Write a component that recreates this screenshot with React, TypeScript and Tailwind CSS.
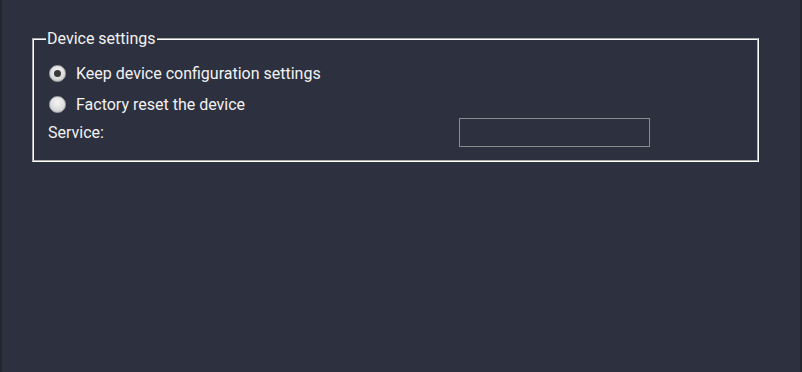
import React from "react";

function Radio({ checked }: { checked?: boolean }) {
  return (
    <span className="relative flex h-[17px] w-[17px] shrink-0 items-center justify-center rounded-full border border-[#a8a8a8] bg-[radial-gradient(circle_at_50%_35%,#f4f4f4_0%,#dedede_55%,#bdbdbd_100%)]">
      {checked && <span className="h-[7px] w-[7px] rounded-full bg-[#3a3a3a]" />}
    </span>
  );
}

export default function App() {
  return (
    <div
      className="flex h-[372px] w-[802px] bg-[#2d303f] text-[#f2f2f2]"
      style={{ fontFamily: "Roboto, 'Liberation Sans', sans-serif" }}
    >
      <div className="w-[2px] bg-[#23252f]" />
      <div className="flex-1 pl-[30px] pr-[41px] pt-[29px]">
        <fieldset className="h-[133px] border-2 border-white px-[14px] [border-style:groove]">
          <legend className="ml-[-2px] px-[1px] text-[16px] leading-[19px]">Device settings</legend>
          <div className="flex flex-col">
            <label className="mt-[14px] flex h-[22px] items-center gap-[10px] pl-[1px]">
              <Radio checked />
              <span className="text-[16px] leading-[19px]">Keep device configuration settings</span>
            </label>
            <label className="mt-[9px] flex h-[22px] items-center gap-[10px] pl-[1px]">
              <Radio />
              <span className="text-[16px] leading-[19px]">Factory reset the device</span>
            </label>
            <div className="mt-[3px] flex h-[29px] items-center">
              <span className="w-[411px] text-[16px] leading-[19px]">Service:</span>
              <div className="h-[29px] w-[191px] border border-[#8c8c8c]" />
            </div>
          </div>
        </fieldset>
      </div>
      <div className="w-[2px] bg-[#23252f]" />
    </div>
  );
}
